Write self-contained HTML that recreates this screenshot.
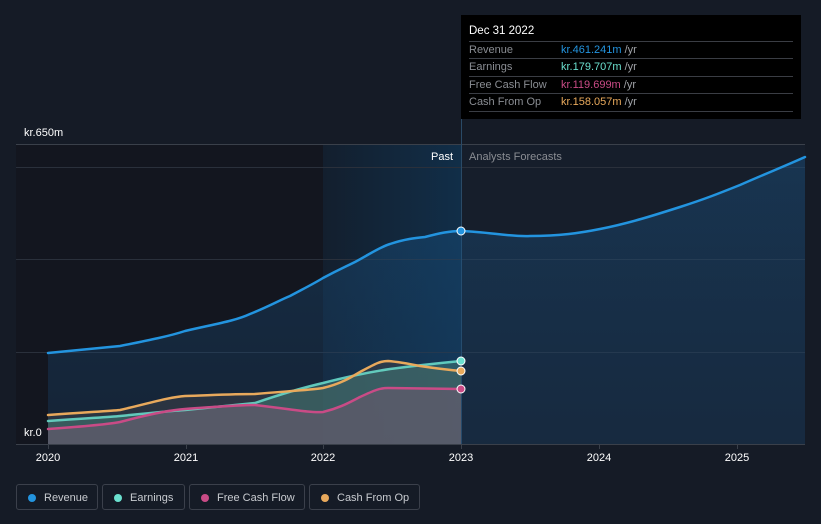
<!DOCTYPE html>
<html><head><meta charset="utf-8"><style>
body{margin:0;width:821px;height:524px;background:#151b26;font-family:"Liberation Sans",sans-serif;overflow:hidden;position:relative}
.tt{position:absolute;left:461px;top:15px;width:340px;height:104px;background:#000;color:#fff;font-size:11px}
.tt .h{position:absolute;left:8px;top:10px;font-size:11.5px}
.row{position:absolute;left:8px;width:324px;height:17px;border-top:1px solid #3a3d44;color:#8a8d93;line-height:17px}
.row span{position:absolute;left:92px}
.row i{font-style:normal;color:#a0a3a8}
.leg{position:absolute;top:484px;height:26px;border:1px solid #3b404b;border-radius:3px;color:#c8cbd0;font-size:11px;line-height:26px;box-sizing:border-box}
.leg b{position:absolute;left:11px;top:9px;width:8px;height:8px;border-radius:50%}
.leg span{position:absolute;left:27px}
</style></head><body>
<svg width="821" height="524" style="position:absolute;left:0;top:0">
<defs>
<linearGradient id="pg" x1="0" x2="1" y1="0" y2="0"><stop offset="0" stop-color="#131f2e"/><stop offset="1" stop-color="#112e48"/></linearGradient>
<linearGradient id="ra" x1="0" x2="0" y1="0" y2="1"><stop offset="0" stop-color="#1a5a8f" stop-opacity=".5"/><stop offset="1" stop-color="#1a4a78" stop-opacity=".35"/></linearGradient>
</defs>
<rect x="16" y="144" width="307" height="300" fill="#13161f"/>
<rect x="323" y="144" width="138" height="300" fill="url(#pg)"/>
<rect x="461" y="144" width="344" height="300" fill="#161e2b"/>
<g stroke="#2a303b" stroke-width="1">
<line x1="16" y1="144.5" x2="805" y2="144.5" stroke="#3a404a"/>
<line x1="16" y1="167.5" x2="805" y2="167.5"/>
<line x1="16" y1="259.5" x2="805" y2="259.5"/>
<line x1="16" y1="352.5" x2="805" y2="352.5"/>
<line x1="16" y1="444.5" x2="805" y2="444.5" stroke="#3a404a"/>
</g>
<line x1="461.5" y1="15" x2="461.5" y2="444" stroke="#2a4a66"/>
<path d="M48,353 C90,349 110,347 120,346 C150,340 170,336 185,331 C215,324 235,321 250,314 C270,306 280,300 290,296 C305,288 315,283 323,278 C340,269 345,267 355,262 C370,254 380,247 390,244 C405,239 415,238 425,237 C440,233 450,231 461,231 C490,232 510,237 530,236 C560,236 580,233 600,229 C630,223 655,215 680,207 C705,199 720,193 740,185 C765,174 785,166 805,157 L805,444 L48,444Z" fill="url(#ra)" opacity=".75"/>
<path d="M48,415 C90,412 110,411 120,410 C150,403 170,397 185,396 C215,395 235,394 255,394 C290,391 310,390 323,388 C340,384 350,378 360,372 C375,364 380,361 388,361 C400,362 410,364 420,366 C440,369 450,370 461,371 L461,444 L48,444Z" fill="#3a4048" opacity=".6"/>
<path d="M48,421 C90,418 110,417 120,416 C150,413 170,411 185,410 C215,407 235,405 255,403 C290,391 310,386 323,383 C350,376 370,372 390,369 C420,365 440,363 461,361 L461,444 L48,444Z" fill="#4a8a80" opacity=".45"/>
<path d="M48,429 C90,426 110,424 120,422 C150,414 170,410 185,409 C215,407 235,405 255,405 C290,409 310,413 323,412 C340,408 350,402 360,397 C375,390 380,388 388,388 L461,389 L461,444 L48,444Z" fill="#705a70" opacity=".55"/>
<g fill="none" stroke-width="2.5" stroke-linecap="round">
<path d="M48,353 C90,349 110,347 120,346 C150,340 170,336 185,331 C215,324 235,321 250,314 C270,306 280,300 290,296 C305,288 315,283 323,278 C340,269 345,267 355,262 C370,254 380,247 390,244 C405,239 415,238 425,237 C440,233 450,231 461,231 C490,232 510,237 530,236 C560,236 580,233 600,229 C630,223 655,215 680,207 C705,199 720,193 740,185 C765,174 785,166 805,157" stroke="#2394df"/>
<path d="M48,421 C90,418 110,417 120,416 C150,413 170,411 185,410 C215,407 235,405 255,403 C290,391 310,386 323,383 C350,376 370,372 390,369 C420,365 440,363 461,361" stroke="#6be0cf" stroke-opacity=".85"/>
<path d="M48,429 C90,426 110,424 120,422 C150,414 170,410 185,409 C215,407 235,405 255,405 C290,409 310,413 323,412 C340,408 350,402 360,397 C375,390 380,388 388,388 L461,389" stroke="#c94b86"/>
<path d="M48,415 C90,412 110,411 120,410 C150,403 170,397 185,396 C215,395 235,394 255,394 C290,391 310,390 323,388 C340,384 350,378 360,372 C375,364 380,361 388,361 C400,362 410,364 420,366 C440,369 450,370 461,371" stroke="#e8a95c"/>
</g>
<g stroke="#fff" stroke-width="1">
<circle cx="461" cy="231" r="4" fill="#2394df"/>
<circle cx="461" cy="361" r="4" fill="#6be0cf"/>
<circle cx="461" cy="371" r="4" fill="#e8a95c"/>
<circle cx="461" cy="389" r="4" fill="#c94b86"/>
</g>
<g stroke="#3a404a"><line x1="48.5" y1="444" x2="48.5" y2="449"/><line x1="186.5" y1="444" x2="186.5" y2="449"/><line x1="323.5" y1="444" x2="323.5" y2="449"/><line x1="461.5" y1="444" x2="461.5" y2="449"/><line x1="599.5" y1="444" x2="599.5" y2="449"/><line x1="737.5" y1="444" x2="737.5" y2="449"/></g>
<g font-family="Liberation Sans,sans-serif" font-size="11" fill="#fff">
<text x="24" y="136">kr.650m</text>
<text x="24" y="436">kr.0</text>
<text x="453" y="160" text-anchor="end">Past</text>
<text x="469" y="160" fill="#8a8d93">Analysts Forecasts</text>
<g text-anchor="middle"><text x="48" y="461">2020</text><text x="186" y="461">2021</text><text x="323" y="461">2022</text><text x="461" y="461">2023</text><text x="599" y="461">2024</text><text x="737" y="461">2025</text></g>
</g>
</svg>
<div class="tt"><div class="h">Dec 31 2022</div>
<div class="row" style="top:26px">Revenue<span style="color:#2394df">kr.461.241m <i>/yr</i></span></div>
<div class="row" style="top:43px">Earnings<span style="color:#6be0cf">kr.179.707m <i>/yr</i></span></div>
<div class="row" style="top:61px">Free Cash Flow<span style="color:#c94b86">kr.119.699m <i>/yr</i></span></div>
<div class="row" style="top:78px;border-bottom:1px solid #3a3d44">Cash From Op<span style="color:#e8a95c">kr.158.057m <i>/yr</i></span></div>
</div>
<div class="leg" style="left:16px;width:82px"><b style="background:#2394df"></b><span>Revenue</span></div>
<div class="leg" style="left:102px;width:83px"><b style="background:#6be0cf"></b><span>Earnings</span></div>
<div class="leg" style="left:189px;width:116px"><b style="background:#c94b86"></b><span>Free Cash Flow</span></div>
<div class="leg" style="left:309px;width:111px"><b style="background:#e8a95c"></b><span>Cash From Op</span></div>
</body></html>
